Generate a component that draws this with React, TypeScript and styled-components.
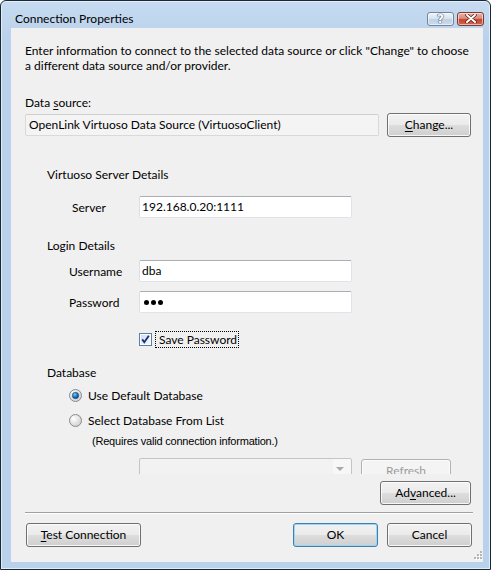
import React from 'react'
import styled, { createGlobalStyle } from 'styled-components'

const GlobalStyle = createGlobalStyle`
  html, body { margin: 0; padding: 0; background: #ffffff; }
  body {
    font-family: Lato, "Liberation Sans", sans-serif;
    font-size: 12px;
    color: #000;
  }
  * { box-sizing: border-box; }
`

const Window = styled.div`
  width: 491px;
  height: 570px;
  border: 1px solid #1d2633;
  border-radius: 6px 6px 0 0;
  background: linear-gradient(180deg, #c6dbf1 0%, #b9d1ea 40px, #b9d1ea 100%);
  box-shadow: inset 0 0 0 1px rgba(230, 245, 255, 0.8);
  display: flex;
  flex-direction: column;
  overflow: hidden;
`

const TitleBar = styled.div`
  height: 27px;
  flex: none;
  display: flex;
  align-items: center;
  padding: 8px 6px 0 14px;
`

const Title = styled.div`
  flex: 1;
  line-height: 15px;
  color: #000;
`

const CaptionButtons = styled.div`
  display: flex;
  gap: 3px;
`

const CaptionButton = styled.div<{ $close?: boolean }>`
  width: 27px;
  height: 14px;
  border: 1px solid ${p => (p.$close ? '#7d3a31' : '#6f859f')};
  border-radius: 3px;
  background: ${p =>
    p.$close
      ? 'linear-gradient(180deg, #eab2a6 0%, #d98a78 45%, #c3432f 55%, #cf6a4f 100%)'
      : 'linear-gradient(180deg, #eef3f9 0%, #d9e5f1 45%, #bfd1e5 55%, #cbdcee 100%)'};
  box-shadow: inset 0 0 0 1px rgba(255, 255, 255, 0.55);
  display: flex;
  align-items: center;
  justify-content: center;
`

const HelpGlyph = styled.span`
  font-family: "DejaVu Sans", sans-serif;
  font-weight: bold;
  font-size: 12px;
  line-height: 12px;
  color: #ffffff;
  text-shadow: 0 0 1px #3b4f68, 0 0 1px #3b4f68, 0 0 1px #3b4f68;
`

const Frame = styled.div`
  flex: 1;
  display: flex;
  padding: 0 7px 7px 10px;
`

const Client = styled.div`
  flex: 1;
  position: relative;
  background: #f0f0f0;
  display: flex;
  flex-direction: column;
  padding: 15px 11px 0 14px;
`

const Description = styled.div`
  line-height: 15px;
  white-space: nowrap;
`

const Label = styled.div<{ $mt: number }>`
  margin-top: ${p => p.$mt}px;
  line-height: 15px;
  white-space: nowrap;
`

const DataSourceRow = styled.div`
  margin-top: 3px;
  display: flex;
  align-items: center;
  gap: 8px;
`

const DataSourceField = styled.div`
  width: 354px;
  height: 22px;
  border: 1px solid #d9d9d9;
  border-top-color: #cfcfcf;
  border-radius: 2px;
  background: #f4f4f4;
  padding-left: 3px;
  line-height: 20px;
  white-space: nowrap;
`

const Button = styled.button<{ $w: number; $default?: boolean; $ml?: number; $mt?: number }>`
  width: ${p => p.$w}px;
  height: 24px;
  flex: none;
  margin-left: ${p => p.$ml || 0}px;
  margin-top: ${p => p.$mt || 0}px;
  padding: 0;
  font: inherit;
  color: #000;
  line-height: 22px;
  text-align: center;
  white-space: nowrap;
  border: 1px solid ${p => (p.$default ? '#3c7fb1' : '#707070')};
  border-radius: 3px;
  background: linear-gradient(180deg, #f2f2f2 0%, #ebebeb 48%, #dddddd 52%, #cfcfcf 100%);
  box-shadow: inset 0 0 0 1px ${p => (p.$default ? '#9fd5f2' : 'rgba(255,255,255,0.8)')};

  &:disabled {
    border-color: #adb2b5;
    background: #f4f4f4;
    color: #9c9c9c;
    box-shadow: inset 0 0 0 1px #fcfcfc;
  }
`

const Panel = styled.div`
  margin-top: 8px;
  height: 329px;
  flex: none;
  overflow: hidden;
  padding: 22px 0 0 22px;
  display: flex;
  flex-direction: column;
`

const FormRow = styled.div<{ $mt: number }>`
  margin-top: ${p => p.$mt}px;
  padding-left: 22px;
  display: grid;
  grid-template-columns: 70px 213px;
  align-items: center;
`

const FieldLabel = styled.div<{ $indent?: number }>`
  padding-left: ${p => p.$indent || 0}px;
  line-height: 15px;
`

const TextBox = styled.div`
  height: 22px;
  background: #ffffff;
  border: 1px solid #e2e3ea;
  border-top-color: #abadb3;
  border-left-color: #dbdfe6;
  border-radius: 2px;
  padding-left: 2px;
  line-height: 20px;
  display: flex;
  align-items: center;
`

const Dot = styled.span`
  width: 5px;
  height: 5px;
  border-radius: 50%;
  background: #000;
  margin-left: 2px;
`

const CheckRow = styled.div`
  margin-top: 18px;
  padding-left: 92px;
  display: flex;
  align-items: center;
  gap: 3px;
  height: 17px;
`

const FocusLabel = styled.div`
  border: 1px dotted #000;
  padding: 0 1px 0 3px;
  line-height: 15px;
`

const RadioRow = styled.div<{ $mt: number }>`
  margin-top: ${p => p.$mt}px;
  padding-left: 22px;
  display: flex;
  align-items: center;
  gap: 6px;
  height: 15px;
`

const Note = styled.div`
  margin-top: 6px;
  padding-left: 45px;
  font-family: "Liberation Sans", Arial, sans-serif;
  font-size: 11px;
  letter-spacing: -0.2px;
  line-height: 14px;
  white-space: nowrap;
`

const ComboRow = styled.div`
  margin-top: 10px;
  padding-left: 92px;
  display: flex;
  align-items: flex-start;
  gap: 9px;
`

const Combo = styled.div`
  width: 213px;
  height: 21px;
  flex: none;
  border: 1px solid #c5c5c5;
  border-radius: 2px;
  background: linear-gradient(90deg, #f2f2f2 0, #f2f2f2 193px, #f7f7f7 193px);
  display: flex;
  justify-content: flex-end;
  align-items: center;
  padding-right: 7px;
`

const ComboArrow = styled.span`
  width: 0;
  height: 0;
  border-left: 4px solid transparent;
  border-right: 4px solid transparent;
  border-top: 4px solid #a8a8a8;
`

const AdvancedRow = styled.div`
  margin-top: 7px;
  display: flex;
  justify-content: flex-end;
  padding-right: 1px;
`

const Separator = styled.div`
  margin-top: 7px;
  margin-right: -1px;
  height: 2px;
  border-top: 1px solid #a0a0a0;
  border-bottom: 1px solid #ffffff;
`

const ButtonBar = styled.div`
  margin-top: 9px;
  display: flex;
  align-items: center;
  gap: 9px;
`

const Spacer = styled.div`
  flex: 1;
`

const SizeGrip = styled.svg`
  position: absolute;
  right: 1px;
  bottom: 1px;
`

const Key = styled.u`
  text-decoration-thickness: 1px;
  text-underline-offset: 2px;
`

function CheckBox() {
  return (
    <svg width="13" height="13" viewBox="0 0 13 13">
      <defs>
        <linearGradient id="cbg" x1="0" y1="0" x2="1" y2="1">
          <stop offset="0" stopColor="#cfdff0" />
          <stop offset="1" stopColor="#f6f9fc" />
        </linearGradient>
      </defs>
      <rect x="0.5" y="0.5" width="12" height="12" fill="#fff" stroke="#5b7fa8" />
      <rect x="2" y="2" width="9" height="9" fill="url(#cbg)" />
      <path d="M3.2 6.4 L5.3 9.2 L9.8 2.8" fill="none" stroke="#1c2c7c" strokeWidth="1.8" />
    </svg>
  )
}

function Radio({ checked }: { checked?: boolean }) {
  return (
    <svg width="13" height="13" viewBox="0 0 13 13">
      <defs>
        <radialGradient id="rbg" cx="0.35" cy="0.35" r="0.8">
          <stop offset="0" stopColor="#ffffff" />
          <stop offset="1" stopColor="#c9c9c9" />
        </radialGradient>
        <radialGradient id="rdot" cx="0.4" cy="0.35" r="0.7">
          <stop offset="0" stopColor="#7fd0ff" />
          <stop offset="0.5" stopColor="#1b79c4" />
          <stop offset="1" stopColor="#0a3f7a" />
        </radialGradient>
      </defs>
      <circle cx="6.5" cy="6.5" r="6" fill="url(#rbg)" stroke="#8b8b8b" />
      {checked && <circle cx="6.5" cy="6.5" r="3.2" fill="url(#rdot)" stroke="#1a4e83" strokeWidth="0.6" />}
    </svg>
  )
}

export default function App() {
  return (
    <>
      <GlobalStyle />
      <Window>
        <TitleBar>
          <Title>Connection Properties</Title>
          <CaptionButtons>
            <CaptionButton>
              <HelpGlyph>?</HelpGlyph>
            </CaptionButton>
            <CaptionButton $close>
              <svg width="12" height="9" viewBox="0 0 12 9">
                <path d="M2 1 L10 8 M10 1 L2 8" stroke="#5a1d16" strokeWidth="3.4" strokeLinecap="round" />
                <path d="M2 1 L10 8 M10 1 L2 8" stroke="#ffffff" strokeWidth="2" strokeLinecap="round" />
              </svg>
            </CaptionButton>
          </CaptionButtons>
        </TitleBar>
        <Frame>
          <Client>
            <Description>
              Enter information to connect to the selected data source or click "Change" to choose
              <br />
              a different data source and/or provider.
            </Description>
            <Label $mt={22}>
              Data <Key>s</Key>ource:
            </Label>
            <DataSourceRow>
              <DataSourceField>OpenLink Virtuoso Data Source (VirtuosoClient)</DataSourceField>
              <Button $w={84}>
                <Key>C</Key>hange...
              </Button>
            </DataSourceRow>

            <Panel>
              <Label $mt={0}>Virtuoso Server Details</Label>
              <FormRow $mt={14}>
                <FieldLabel $indent={3}>Server</FieldLabel>
                <TextBox>192.168.0.20:1111</TextBox>
              </FormRow>

              <Label $mt={20}>Login Details</Label>
              <FormRow $mt={7}>
                <FieldLabel>Username</FieldLabel>
                <TextBox>dba</TextBox>
              </FormRow>
              <FormRow $mt={9}>
                <FieldLabel>Password</FieldLabel>
                <TextBox>
                  <Dot />
                  <Dot />
                  <Dot />
                </TextBox>
              </FormRow>
              <CheckRow>
                <CheckBox />
                <FocusLabel>Save Password</FocusLabel>
              </CheckRow>

              <Label $mt={17}>Database</Label>
              <RadioRow $mt={8}>
                <Radio checked />
                Use Default Database
              </RadioRow>
              <RadioRow $mt={10}>
                <Radio />
                Select Database From List
              </RadioRow>
              <Note>(Requires valid connection information.)</Note>
              <ComboRow>
                <Combo>
                  <ComboArrow />
                </Combo>
                <Button $w={90} $mt={1} disabled>
                  Refresh
                </Button>
              </ComboRow>
            </Panel>

            <AdvancedRow>
              <Button $w={91}>
                Ad<Key>v</Key>anced...
              </Button>
            </AdvancedRow>
            <Separator />
            <ButtonBar>
              <Button $w={115} $ml={1}>
                <Key>T</Key>est Connection
              </Button>
              <Spacer />
              <Button $w={85} $default>
                OK
              </Button>
              <Button $w={85}>Cancel</Button>
            </ButtonBar>

            <SizeGrip width="10" height="10" viewBox="0 0 10 10">
              {[
                [8, 0],
                [8, 3],
                [5, 3],
                [8, 6],
                [5, 6],
                [2, 6],
              ].map(([x, y]) => (
                <g key={`${x}-${y}`}>
                  <rect x={x + 1} y={y + 1} width="2" height="2" fill="#ffffff" />
                  <rect x={x} y={y} width="2" height="2" fill="#b5b5b5" />
                </g>
              ))}
            </SizeGrip>
          </Client>
        </Frame>
      </Window>
    </>
  )
}
